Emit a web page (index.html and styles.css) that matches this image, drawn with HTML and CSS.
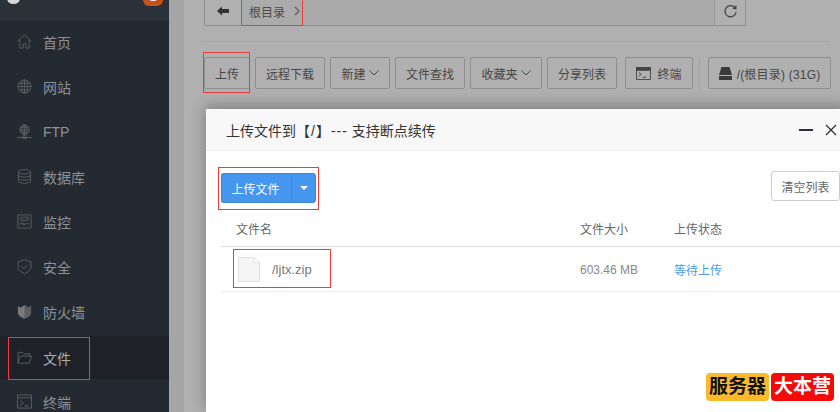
FILE: index.html
```html
<!DOCTYPE html>
<html lang="zh">
<head>
<meta charset="utf-8">
<title>文件</title>
<link rel="stylesheet" href="styles.css">
</head>
<body>
<div class="app">
  <aside class="sidebar">
    <div class="brand">
      <span class="brand-dot"></span>
      <span class="brand-name">bt-server-lts</span>
      <span class="brand-badge">1</span>
    </div>
    <nav class="nav">
      <a class="nav-item"><svg class="nav-icon" viewBox="0 0 16 16"><path d="M.5 8 8 1l7.500 7M3 6.500V15h3.500v-4.500h3V15H13V6.500"/></svg>首页</a>
      <a class="nav-item"><svg class="nav-icon" viewBox="0 0 16 16"><circle cx="8" cy="8" r="7"/><ellipse cx="8" cy="8" rx="3.500" ry="7"/><path d="M8 1v14M1 8h14M2 4.500h12M2 11.500h12"/></svg>网站</a>
      <a class="nav-item"><svg class="nav-icon" viewBox="0 0 16 16"><circle cx="8" cy="6" r="5"/><ellipse cx="8" cy="6" rx="2.300" ry="5"/><path d="M3 6h10M8 1v10M3.500 3.500h9M3.500 8.500h9M0 14.500h16M6.500 12.500h3v3h-3z"/></svg>FTP</a>
      <a class="nav-item"><svg class="nav-icon" viewBox="0 0 16 16"><ellipse cx="8" cy="3" rx="6.500" ry="2.300"/><path d="M1.500 3v10c0 1.300 3 2.300 6.500 2.300s6.500-1 6.500-2.300V3M1.500 6.300c0 1.300 3 2.300 6.500 2.300s6.500-1 6.500-2.300M1.500 9.700c0 1.300 3 2.300 6.500 2.300s6.500-1 6.500-2.300"/></svg>数据库</a>
      <a class="nav-item"><svg class="nav-icon" viewBox="0 0 16 16"><path d="M1 1h14v14H1zM4 3.500h8v3H4zM2.500 10.500H5l1-2 1.500 4 1.500-3 1 1h3"/></svg>监控</a>
      <a class="nav-item"><svg class="nav-icon" viewBox="0 0 16 16"><path d="M8 .8 14.800 3v6c0 3.200-3.200 5.300-6.800 6.300C4.400 14.300 1.200 12.200 1.200 9V3zM4.800 7.800l2.400 2.400 4-4"/></svg>安全</a>
      <a class="nav-item"><svg class="nav-icon nav-icon-solid" viewBox="0 0 16 16"><path d="M1 2.500 4 4l4-3 4 3 3-1.500V9c0 3.200-3.200 5.300-7 6.500C4.200 14.300 1 12.200 1 9z"/><path class="shade" d="M8 1l4 3 3-1.500V9c0 3.200-3.200 5.300-7 6.500z"/></svg>防火墙</a>
      <a class="nav-item nav-item-active"><svg class="nav-icon" viewBox="0 0 16 16"><path d="M1 14V2.500h4.500L7 4h6.500v2.500M1 14l2.500-7.500H15.500L13 14z"/></svg>文件</a>
      <a class="nav-item"><svg class="nav-icon" viewBox="0 0 16 16"><path d="M.5 1h15v14H.5zM.5 4h15M3.500 7l3 2.500-3 2.500M8 12.500h4"/></svg>终端</a>
    </nav>
    <span class="mark mark-side"></span>
  </aside>

  <main class="main">
    <div class="panel">
      <div class="pathbar">
        <button class="path-back"><svg class="back-icon" viewBox="0 0 12 10"><path d="M0 5 5 .5V3h7v4H5v2.500z"/></svg></button>
        <div class="crumbs"><span class="crumb">根目录</span><svg class="crumb-arrow" viewBox="0 0 6 10"><path d="m1 1 4 4-4 4"/></svg></div>
        <button class="path-refresh"><svg class="refresh-icon" viewBox="0 0 16 16"><path d="M12.800 4A6 6 0 1 0 14 8.500"/><path class="fill" d="M10 4.800 14.300 1v5z"/></svg></button>
      </div>
      <hr class="rule">
      <div class="toolbar">
        <button class="tool tool-upload">上传</button>
        <button class="tool tool-remote">远程下载</button>
        <button class="tool tool-new">新建<svg class="chev" viewBox="0 0 10 6"><path d="m.5.500 4.500 4.500L9.500.500"/></svg></button>
        <button class="tool tool-find">文件查找</button>
        <button class="tool tool-fav">收藏夹<svg class="chev" viewBox="0 0 10 6"><path d="m.5.500 4.500 4.500L9.500.500"/></svg></button>
        <button class="tool tool-share">分享列表</button>
        <button class="tool tool-term"><svg class="term-icon" viewBox="0 0 16 14"><path d="M.5.500h15v13H.5z"/><path class="bar" d="M.5.500h15v3H.5z"/><path d="m3 6 2.500 2L3 10M7 11h4"/></svg>终端</button>
        <span class="tool-sep"></span>
        <button class="tool tool-disk"><svg class="disk-icon" viewBox="0 0 13 13"><path d="M2.500 0h8L13 8H0z"/><path d="M0 9h13v4H0z"/></svg><span class="disk-label">/(根目录) (31G)</span></button>
      </div>
    </div>
  </main>
</div>

<section class="dialog">
  <header class="dialog-head">
    <h2 class="dialog-title">上传文件到<span class="title-mark">【/】---</span> 支持断点续传</h2>
    <div class="dialog-ctrl">
      <span class="dialog-min"></span>
      <svg class="dialog-close" viewBox="0 0 12 12"><path d="m1 1 10 10M11 1 1 11"/></svg>
    </div>
  </header>
  <div class="dialog-body">
    <div class="actions">
      <div class="split">
        <button class="split-main">上传文件</button>
        <button class="split-caret"><span class="caret"></span></button>
      </div>
      <button class="clear">清空列表</button>
    </div>
    <div class="row row-head">
      <span class="col-name">文件名</span>
      <span class="col-size">文件大小</span>
      <span class="col-state">上传状态</span>
    </div>
    <div class="row row-file">
      <span class="col-name file-cell">
        <svg class="file-icon" viewBox="0 0 23 26"><path class="sheet" d="M.5.500H17L22.500 6v19.500H.5z"/><path class="fold" d="M17 .5V6h5.500z"/></svg>
        <span class="file-name">/ljtx.zip</span>
      </span>
      <span class="col-size file-size">603.46 MB</span>
      <span class="col-state file-state">等待上传</span>
    </div>
  </div>
</section>

<span class="mark mark-path"></span>
<span class="mark mark-upload"></span>
<span class="mark mark-split"></span>
<span class="mark mark-file"></span>

<div class="stamp"><span class="stamp-a">服务器</span><span class="stamp-b">大本营</span></div>
</body>
</html>
```

FILE: styles.css
```css
* { box-sizing: border-box; }
html, body { margin: 0; height: 412px; overflow: hidden; }
body {
  width: 840px;
  position: relative;
  font-family: "Liberation Sans", "Noto Sans CJK SC", sans-serif;
  font-size: 12px;
}
button { font: inherit; margin: 0; cursor: default; }
.app { display: flex; height: 412px; background: #a6a6a6; }

/* Sidebar */
.sidebar { width: 169px; flex: none; background: #242a31; position: relative; }
.brand {
  height: 21px;
  background: #2b3139;
  position: relative;
  overflow: hidden;
}
.brand-dot { position: absolute; left: 7px; top: -7px; width: 13px; height: 11px; border-radius: 50%; background: #d6d6d6; }
.brand-name { position: absolute; left: 30px; top: -11px; color: #c8ccd0; font-size: 13px; line-height: 13px; letter-spacing: .6px; white-space: nowrap; }
.brand-badge {
  position: absolute; left: 143px; top: -14px; width: 20px; height: 20px;
  border-radius: 6px; background: #c65218; color: #eee; font-size: 12px; line-height: 23px; text-align: center;
}
.nav { display: flex; flex-direction: column; }
.nav-item {
  height: 45px;
  display: flex;
  align-items: center;
  padding-left: 17px;
  gap: 11px;
  color: #8c9297;
  font-size: 14px;
  flex: none;
}
.nav-item:first-child { height: 43px; padding-bottom: 2px; }
.nav-item-active { background: #1e2228; color: #a9adb0; height: 43px; margin-top: 2px; }
.nav-icon {
  flex: none;
  fill: none; stroke: #5a5f64; stroke-width: 1;
  width: 15px; height: 15px;
}
.nav-icon-solid { fill: #77797b; stroke: none; }
.nav-icon-solid .shade { fill: #5d5f61; }

/* Main */
.main { flex: 1; padding-left: 15px; min-width: 0; }
.panel { background: #b0b0b0; height: 412px; padding: 0 11px 0 20px; width: 100%; }
.pathbar {
  width: 542px; height: 26px;
  display: flex;
  border: 1px solid #8e8e8e;
  border-top: 0;
  background: #ababab;
}
.path-back { width: 36px; border: 0; background: #b0b0b0; padding: 0 0 3px; display: flex; align-items: center; justify-content: center; }
.back-icon { width: 12px; height: 10px; fill: #333; }
.crumbs { flex: 1; display: flex; align-items: center; padding: 0 0 3px 8px; gap: 9px; color: #4a4a4a; }
.crumb-arrow { width: 6px; height: 10px; fill: none; stroke: #666; stroke-width: 1.500; }
.path-refresh { width: 31px; border: 0; border-left: 1px solid #969696; background: #b0b0b0; padding: 0 0 3px; display: flex; align-items: center; justify-content: center; }
.refresh-icon { width: 15px; height: 15px; fill: none; stroke: #444; stroke-width: 1.300; }
.refresh-icon .fill { fill: #444; stroke: none; }
.rule { margin: 15px 0; border: 0; border-top: 1px solid #a3a3a3; }
.toolbar { display: flex; align-items: center; height: 32px; gap: 5px; }
.tool {
  height: 32px; border: 1px solid #8e8e8e; border-radius: 2px; background: #b0b0b0; color: #464646;
  padding: 0; display: flex; align-items: center; justify-content: center; flex: none; font-size: 12px;
}
.tool-upload { width: 46px; }
.tool-remote { width: 70px; }
.tool-new { width: 60px; gap: 3px; }
.tool-find { width: 70px; }
.tool-fav { width: 72px; gap: 3px; }
.tool-share { width: 70px; }
.tool-term { width: 68px; margin-left: 3px; gap: 6px; }
.tool-sep { width: 1px; height: 32px; background: #a3a3a3; flex: none; margin: 0 3px 0 1px; }
.tool-disk { width: 123px; gap: 5px; }
.disk-label { letter-spacing: .2px; }
.chev { width: 10px; height: 6px; fill: none; stroke: #444; stroke-width: 1; }
.term-icon { width: 15px; height: 13px; fill: none; stroke: #444; stroke-width: 1; }
.term-icon .bar { fill: #444; }
.disk-icon { width: 13px; height: 13px; fill: #3a3a3a; }

/* Dialog */
.dialog {
  position: absolute; left: 206px; top: 109px; width: 640px; height: 303px;
  background: #fff;
  box-shadow: 0 -3px 14px rgba(0, 0, 0, .3);
}
.dialog-head {
  height: 42px;
  background: #f8f8f8;
  border-bottom: 1px solid #eee;
  display: flex;
  align-items: center;
  justify-content: space-between;
  padding: 0 9px 0 20px;
}
.dialog-title { margin: 0; font-weight: 400; font-size: 14px; color: #333; }
.title-mark { letter-spacing: 1px; }
.dialog-ctrl { display: flex; align-items: center; gap: 12px; }
.dialog-min { width: 14px; height: 2px; background: #2f2f3c; }
.dialog-close { width: 12px; height: 12px; fill: none; stroke: #2f2f3c; stroke-width: 1.300; }
.dialog-body { padding: 20px 0 0 15px; }
.actions { display: flex; align-items: flex-start; justify-content: space-between; height: 32px; padding-right: 6px; }
.split { display: flex; height: 30px; margin-top: 2px; }
.split-main, .split-caret { border: 1px solid #3d89c5; background: #4496ef; color: #fff; }
.split-main { width: 70px; border-radius: 3px 0 0 3px; border-right: 0; font-size: 12px; padding: 0 2px 0 0; }
.split-caret { width: 25px; border-radius: 0 3px 3px 0; display: flex; align-items: center; justify-content: center; padding: 0; }
.caret { border: 4px solid transparent; border-top-color: #fff; border-bottom: 0; }
.clear { width: 69px; height: 30px; border: 1px solid #ccc; border-radius: 3px; background: #fff; color: #666; padding: 0; font-size: 12px; }
.row { display: flex; align-items: center; border-bottom: 1px solid #e2e2e2; color: #666; }
.row-head { height: 35px; margin-top: 9px; padding-bottom: 2px; border-bottom-color: #ddd; }
.row-file { height: 45px; padding-top: 1px; border-bottom-color: #eee; }
.col-name { width: 359px; padding-left: 15px; flex: none; }
.col-size { width: 94px; flex: none; }
.file-cell { display: flex; align-items: center; padding-left: 17px; gap: 12px; }
.file-icon { width: 22px; height: 25px; flex: none; }
.file-icon .sheet { fill: #f5f5f5; stroke: #e0e0e0; }
.file-icon .fold { fill: #fff; stroke: #e0e0e0; }
.file-name { color: #777; font-size: 13px; }
.file-size { color: #888; }
.file-state { color: #4a9ce8; }

/* Red annotation boxes */
.mark { position: absolute; border: 1px solid #f13a3a; pointer-events: none; }
.mark-side { left: 8px; top: 337px; width: 82px; height: 43px; }
.mark-path { left: 241px; top: -3px; width: 62px; height: 29px; }
.mark-upload { left: 203px; top: 52px; width: 47px; height: 41px; }
.mark-split { left: 218px; top: 167px; width: 101px; height: 43px; }
.mark-file { left: 233px; top: 249px; width: 98px; height: 39px; }

/* Watermark */
.stamp { position: absolute; left: 706px; top: 373px; display: flex; gap: 2px; font-size: 19px; line-height: 27px; font-weight: 700; }
.stamp-a { background: #fdb92c; color: #111; border-radius: 4px; padding: 0 3px; height: 28px; }
.stamp-b { background: #f50a0a; color: #fff; border-radius: 4px; padding: 0 3px; height: 28px; }
```
